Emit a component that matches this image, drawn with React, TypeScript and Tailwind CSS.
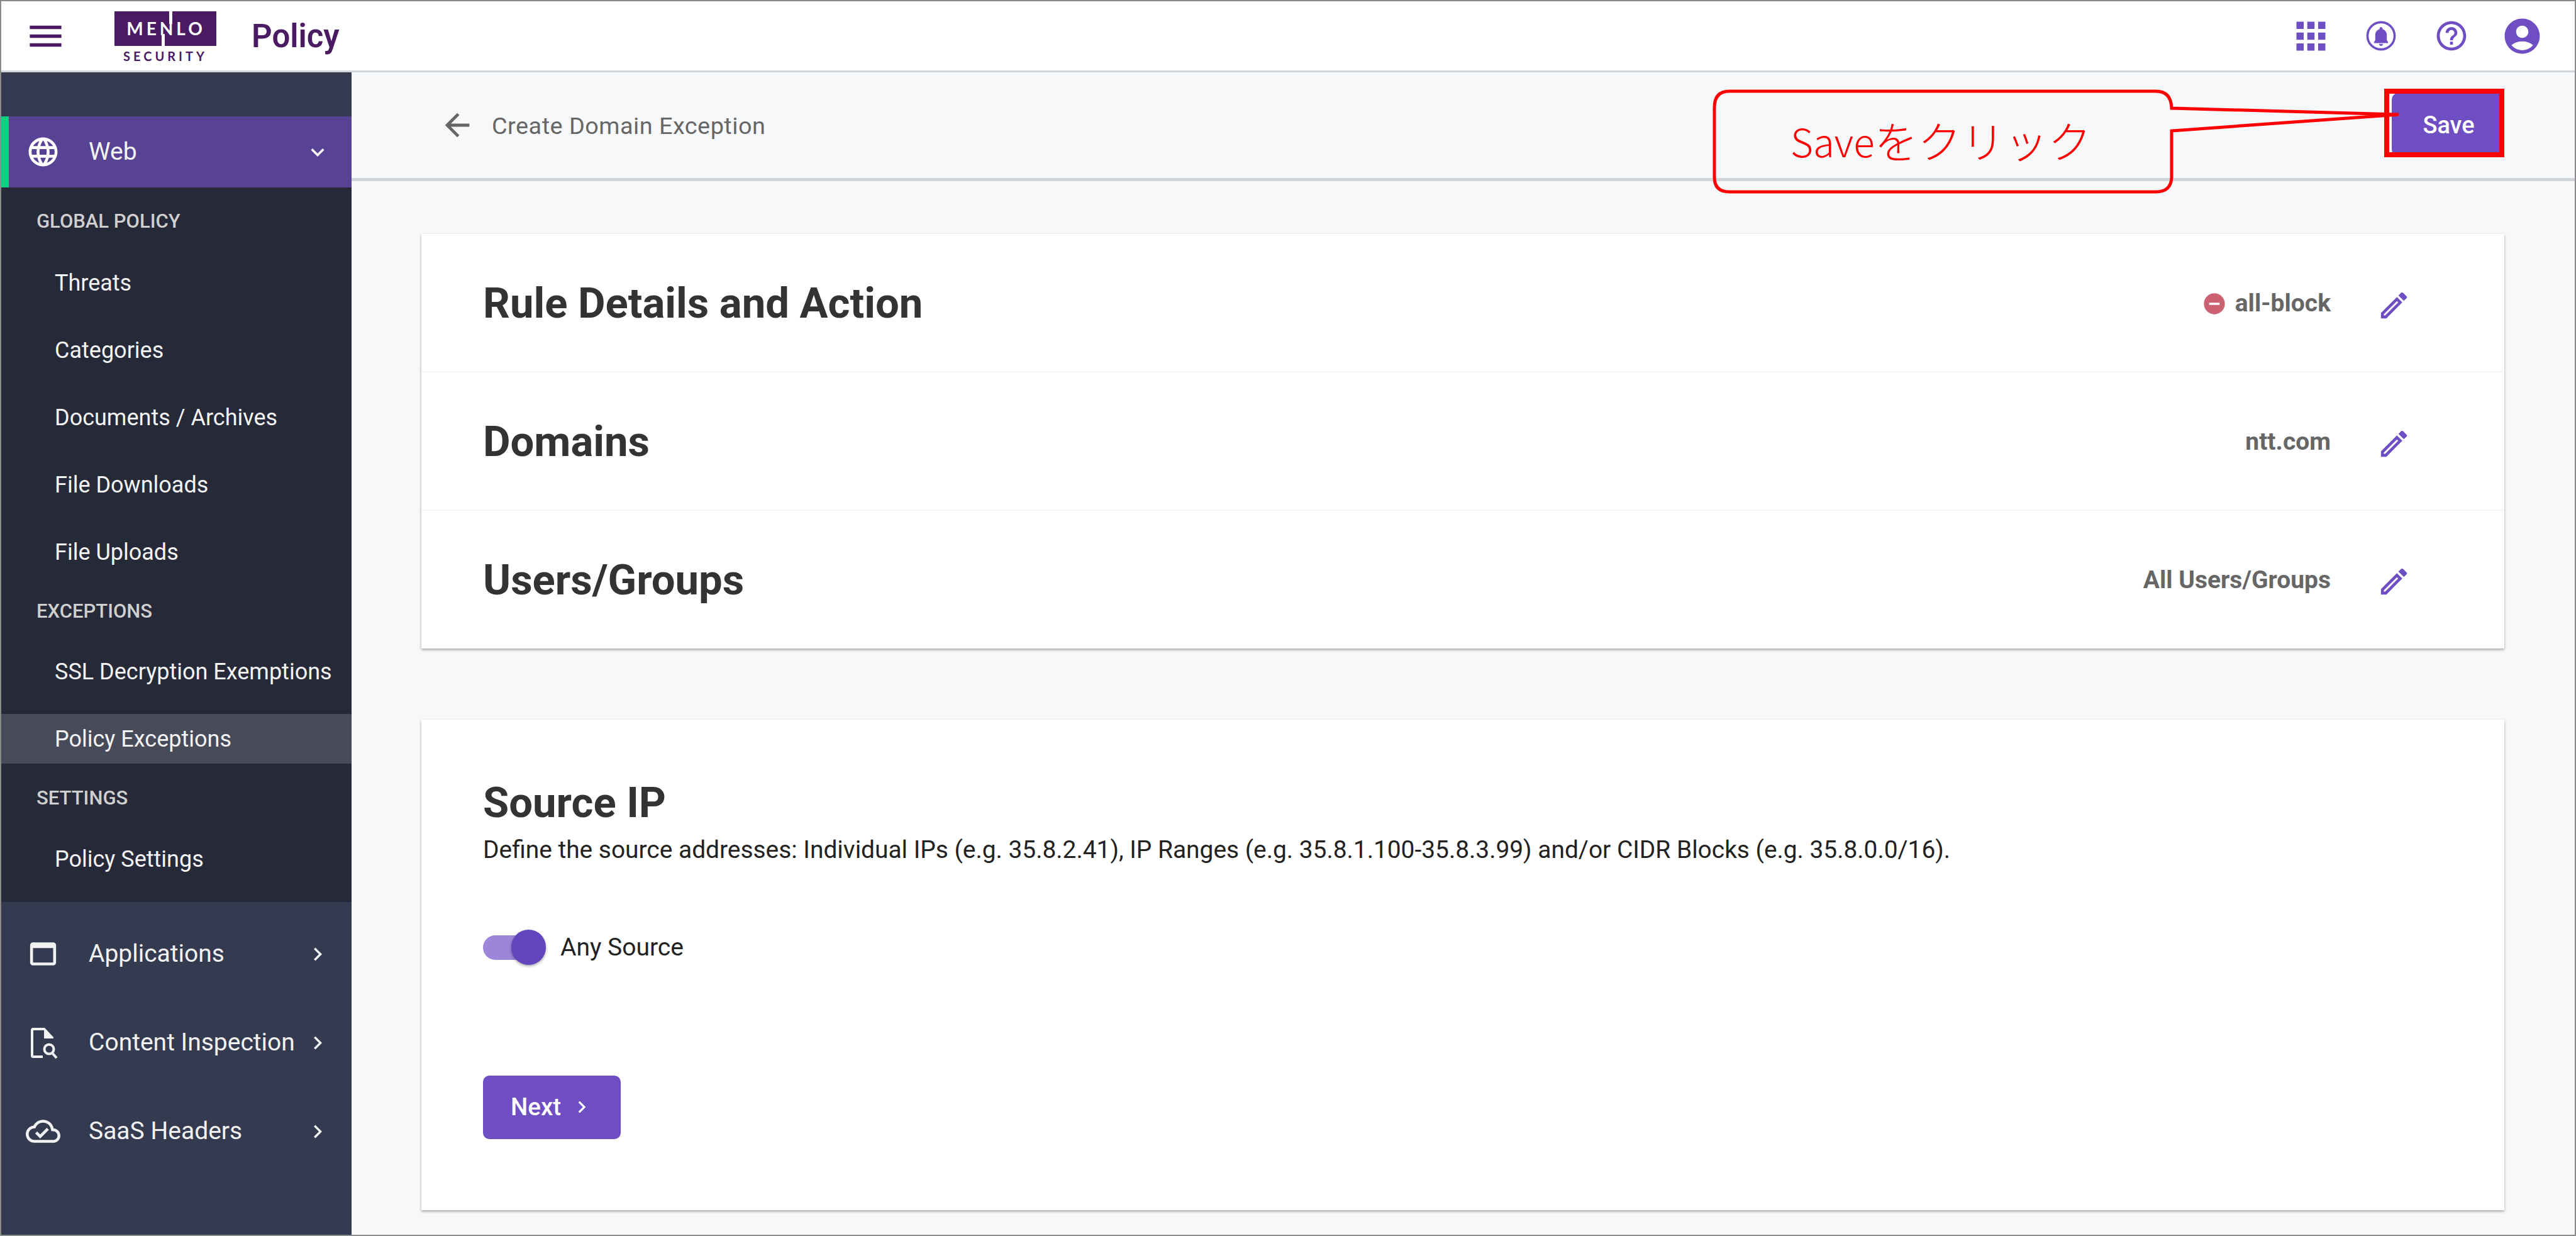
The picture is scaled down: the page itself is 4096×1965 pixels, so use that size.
import React from "react";
import {
  MdAccountCircle,
  MdApps,
  MdArrowBack,
  MdHelpOutline,
  MdKeyboardArrowDown,
  MdKeyboardArrowRight,
  MdLanguage,
  MdMenu,
  MdOutlineCloudDone,
  MdOutlineEdit,
  MdOutlineWebAsset,
  MdRemoveCircle,
} from "react-icons/md";

const Logo = () => (
  <svg width="162" height="92" viewBox="0 0 162 92" className="block mt-[14px]">
    <rect width="162" height="55" fill="#4a1b62" />
    <rect x="87" y="0" width="5" height="20" fill="#fff" />
    <rect x="75" y="36" width="5" height="19" fill="#fff" />
    <text x="82" y="38" textAnchor="middle" fontFamily="Lato" fontWeight="700" fontSize="28" letterSpacing="5" fill="#fff">
      MENLO
    </text>
    <text x="81" y="79" textAnchor="middle" fontFamily="Lato" fontWeight="700" fontSize="20" letterSpacing="5" fill="#4a1b62">
      SECURITY
    </text>
  </svg>
);

const BellCircle = () => (
  <svg width="48" height="48" viewBox="0 0 24 24" fill="#6f4ec3">
    <circle cx="12" cy="12" r="10.8" fill="none" stroke="#6f4ec3" strokeWidth="1.8" />
    <path d="M12 20c.9 0 1.6-.7 1.6-1.6h-3.2c0 .9.7 1.6 1.6 1.6zm4.6-4.6v-3.8c0-2.4-1.2-4.3-3.4-4.8v-.6c0-.7-.5-1.2-1.2-1.2s-1.2.5-1.2 1.2v.6c-2.2.5-3.4 2.4-3.4 4.8v3.8L6.4 17v.7h11.2V17z" />
  </svg>
);

// file with a magnifier sitting on its lower right corner
const ContentIcon = () => (
  <svg width="44" height="50" viewBox="0 0 44 50" fill="none" stroke="currentColor" strokeWidth="4" className="ml-[7px]">
    <path d="M22 3H5Q3 3 3 5V45Q3 47 5 47H20" />
    <path d="M23 1L37 16V18H22V1Z" fill="currentColor" stroke="none" />
    <circle cx="30" cy="35" r="7.5" />
    <path d="M35 41L42 49" />
  </svg>
);

const SectionLabel = ({ text, className }: { text: string; className: string }) => (
  <div className={`h-[60px] flex items-center pl-[56px] text-[31px] font-medium text-[#cfcfcf] ${className}`}>{text}</div>
);

const SubItem = ({ text, className, active }: { text: string; className: string; active?: boolean }) => (
  <div className={`h-[79px] flex items-center pl-[85px] text-[36px] text-[#f4f4f4] ${active ? "bg-[#474a58]" : ""} ${className}`}>
    {text}
  </div>
);

const NavItem = ({ icon, text }: { icon: React.ReactNode; text: string }) => (
  <div className="h-[141px] flex items-center text-[39px] text-[#f2f2f2]">
    <div className="w-[139px] pl-[39px] shrink-0">{icon}</div>
    <div className="flex-1 whitespace-nowrap">{text}</div>
    <MdKeyboardArrowRight size={42} className="mr-[33px] shrink-0" />
  </div>
);

const SummaryRow = ({ title, value, icon, className }: { title: string; value: string; icon?: boolean; className: string }) => (
  <div className={`h-[220px] flex items-center pl-[98px] pr-[148px] ${className}`}>
    <div className="flex-1 text-[67px] font-bold text-[#333333]">{title}</div>
    {icon && <MdRemoveCircle size={40} color="#cc6172" className="mr-[13px]" />}
    <div className="text-[39px] font-bold text-[#666666]">{value}</div>
    <MdOutlineEdit size={55} color="#6f4ec3" className="ml-[73px] mt-[5px]" />
  </div>
);

export default function App() {
  return (
    <div className="relative w-[4096px] h-[1965px] overflow-hidden font-['Roboto',sans-serif]">
      <div className="w-full h-full border-2 border-[#8a8a8a] flex flex-col bg-[#f7f8fa]">
        {/* top bar */}
        <header className="h-[113px] shrink-0 bg-white border-b-[3px] border-[#d1d5da] flex items-center">
          <MdMenu size={67} color="#4a1b62" className="ml-[37px]" />
          <div className="ml-[76px]">
            <Logo />
          </div>
          <div className="ml-[56px] text-[51px] font-semibold text-[#4a1b62] leading-none">Policy</div>
          <div className="ml-auto mr-[28px] flex items-center text-[#6f4ec3]">
            <div className="w-[112px] flex justify-center"><MdApps size={69} /></div>
            <div className="w-[112px] flex justify-center"><BellCircle /></div>
            <div className="w-[112px] flex justify-center"><MdHelpOutline size={56} /></div>
            <div className="w-[112px] flex justify-center"><MdAccountCircle size={67} /></div>
          </div>
        </header>

        <div className="flex-1 flex min-h-0">
          {/* sidebar */}
          <aside className="w-[557px] shrink-0 bg-[#343a4f] pt-[70px] text-white">
            <div className="h-[113px] bg-[#584294] border-l-[12px] border-[#07d17f] flex items-center">
              <MdLanguage size={55} className="ml-[27px] shrink-0" />
              <div className="ml-[45px] flex-1 text-[39px] text-[#f4f4f4]">Web</div>
              <MdKeyboardArrowDown size={42} className="mr-[33px]" />
            </div>
            <div className="bg-[#262938] pt-[24px] pb-[29px]">
              <SectionLabel text="GLOBAL POLICY" className="" />
              <SubItem text="Threats" className="mt-[28px]" />
              <SubItem text="Categories" className="mt-[28px]" />
              <SubItem text="Documents / Archives" className="mt-[28px]" />
              <SubItem text="File Downloads" className="mt-[28px]" />
              <SubItem text="File Uploads" className="mt-[28px]" />
              <SectionLabel text="EXCEPTIONS" className="mt-[25px]" />
              <SubItem text="SSL Decryption Exemptions" className="mt-[26px]" />
              <SubItem text="Policy Exceptions" className="mt-[28px]" active />
              <SectionLabel text="SETTINGS" className="mt-[25px]" />
              <SubItem text="Policy Settings" className="mt-[27px]" />
            </div>
            <div className="pt-[12px]">
              <NavItem icon={<MdOutlineWebAsset size={55} />} text="Applications" />
              <NavItem icon={<ContentIcon />} text="Content Inspection" />
              <NavItem icon={<MdOutlineCloudDone size={55} />} text="SaaS Headers" />
            </div>
          </aside>

          {/* main */}
          <main className="flex-1 min-w-0 flex flex-col">
            <div className="h-[173px] shrink-0 border-b-[5px] border-[#d1d5da] flex items-center pl-[139px] pr-[112px]">
              <MdArrowBack size={58} color="#666666" />
              <div className="ml-[26px] mt-[3px] text-[37.8px] text-[#666666] tracking-[0.5px]">Create Domain Exception</div>
              <div className="ml-auto bg-white pl-[2px] self-start mt-[33px]">
                <button className="w-[179px] h-[100px] bg-[#6f4ec3] rounded-[10px] text-white text-[38px] font-medium pl-[2px] pt-[2px]">
                  Save
                </button>
              </div>
            </div>

            <div className="pl-[111px] pr-[112px] pt-[84px]">
              <section className="bg-white h-[659px] shadow-[0_2px_4px_rgba(0,0,0,0.35)]">
                <SummaryRow title="Rule Details and Action" value="all-block" icon className="border-b-2 border-[#f5f5f5] pt-[3px]" />
                <SummaryRow title="Domains" value="ntt.com" className="border-b-2 border-[#f5f5f5] pt-[3px]" />
                <SummaryRow title="Users/Groups" value="All Users/Groups" className="" />
              </section>

              <section className="mt-[113px] bg-white h-[780px] shadow-[0_2px_4px_rgba(0,0,0,0.35)] pl-[98px] pt-[83px]">
                <div className="text-[67px] font-bold text-[#333333] leading-[98px]">Source IP</div>
                <div className="text-[38.9px] text-[#222222] leading-[52px]">
                  Define the source addresses: Individual IPs (e.g. 35.8.2.41), IP Ranges (e.g. 35.8.1.100-35.8.3.99) and/or CIDR Blocks (e.g. 35.8.0.0/16).
                </div>
                <div className="mt-[100px] flex items-center">
                  <div className="relative w-[87px] h-[39px] rounded-full bg-[#9d85d9]">
                    <div className="absolute left-[45px] top-[-9px] w-[55px] h-[56px] rounded-full bg-[#6345bd] shadow-[0_2px_4px_rgba(0,0,0,0.35)]" />
                  </div>
                  <div className="ml-[36px] text-[39px] text-[#222222]">Any Source</div>
                </div>
                <button className="mt-[174px] w-[219px] h-[101px] rounded-[10px] bg-[#6f4ec3] text-white flex items-center pl-[44px] text-[38.5px] font-medium">
                  Next
                  <MdKeyboardArrowRight size={38} className="ml-[14px]" />
                </button>
              </section>
            </div>
          </main>
        </div>
      </div>

      {/* red callout drawn over the page */}
      <svg className="absolute inset-0 pointer-events-none" width="4096" height="1965" viewBox="0 0 4096 1965" fill="none">
        <path
          d="M2750 145H3428Q3452 145 3453 172L3814 182L3453 208V282Q3452 305 3428 305H2750Q2726 305 2726 282V171Q2726 145 2750 145Z"
          stroke="#ff0000"
          strokeWidth="5"
        />
      </svg>
      <div className="absolute left-[2847px] top-[140px] h-[166px] flex items-center text-[#ff0000] font-['Noto_Sans_CJK_JP',sans-serif] font-light whitespace-nowrap">
        <span className="text-[62px]">Save</span>
        <span className="text-[69px]">をクリック</span>
      </div>
      <div className="absolute left-[3791px] top-[141px] w-[191px] h-[109px] border-[8px] border-[#ff0000]" />
    </div>
  );
}
